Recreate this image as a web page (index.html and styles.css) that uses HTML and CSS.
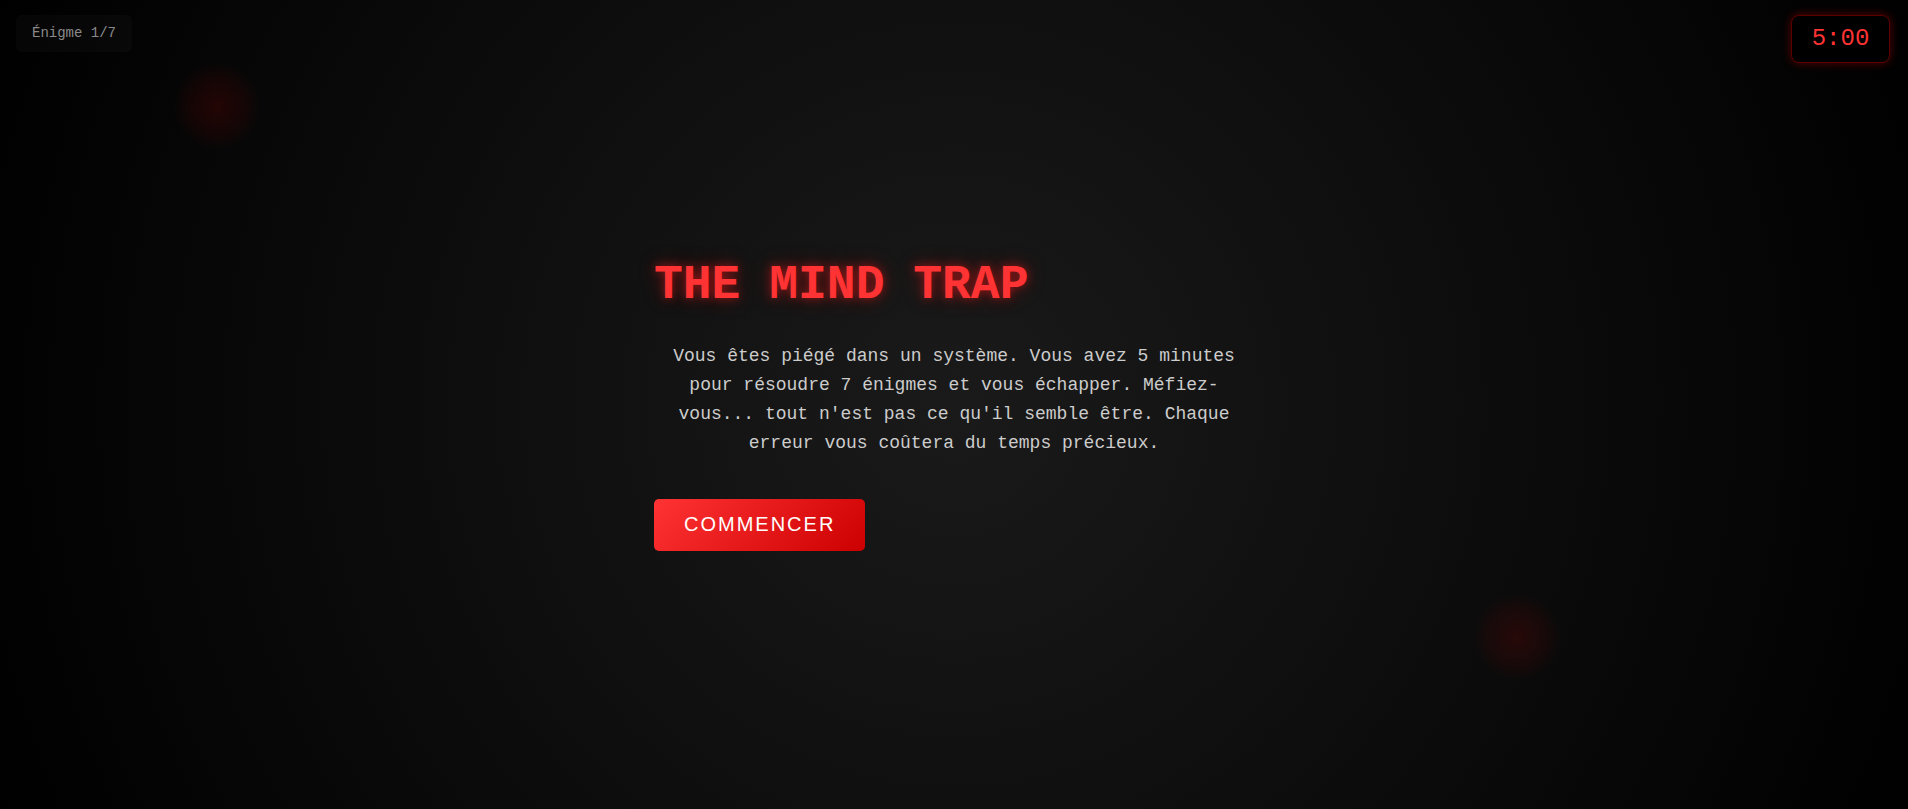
FILE: index.html
```html
<!DOCTYPE html>
<html lang="fr">
<head>
<meta charset="utf-8">
<title>The Mind Trap</title>
<link rel="stylesheet" href="styles.css">
</head>
<body>
  <div class="glow glow-a"></div>
  <div class="glow glow-b"></div>
  <div class="level">Énigme 1/7</div>
  <div class="timer">5:00</div>
  <main class="screen">
    <div class="intro">
      <h1 class="title">THE MIND TRAP</h1>
      <p class="story">Vous êtes piégé dans un système. Vous avez 5 minutes pour résoudre 7 énigmes et vous échapper. Méfiez-vous... tout n'est pas ce qu'il semble être. Chaque erreur vous coûtera du temps précieux.</p>
      <button class="start">COMMENCER</button>
    </div>
  </main>
</body>
</html>
```
FILE: styles.css
```css
* { box-sizing: border-box; }
html, body { height: 100%; }
body {
  margin: 0;
  overflow: hidden;
  background: radial-gradient(circle at center, #1a1a1a 0%, #000000 100%);
  font-family: "Liberation Mono", "Courier New", monospace;
  color: #cccccc;
}
.screen {
  height: 100%;
  display: flex;
  align-items: center;
  justify-content: center;
}
.intro {
  width: 600px;
}
.title {
  margin: 0 0 30px;
  font-family: "Liberation Mono", "Courier New", monospace;
  font-weight: bold;
  font-size: 48px;
  line-height: 54px;
  color: #ff3333;
  text-shadow: 0 0 10px rgba(255, 30, 30, 0.5), 0 0 22px rgba(255, 0, 0, 0.28);
}
.story {
  margin: 0 0 41px;
  text-align: center;
  font-size: 18px;
  line-height: 28.8px;
  color: #cccccc;
}
.start {
  display: block;
  border: none;
  border-radius: 5px;
  padding: 14px 30px 15px;
  background: linear-gradient(135deg, #ff3333 0%, #cc0000 100%);
  color: #ffffff;
  font-family: "Liberation Sans", Arial, sans-serif;
  font-size: 20px;
  line-height: 23px;
  letter-spacing: 2px;
  cursor: pointer;
}
.level {
  position: absolute;
  top: 15px;
  left: 16px;
  padding: 10px 16px 11px;
  border-radius: 5px;
  background: rgba(255, 255, 255, 0.022);
  color: #8a8a8a;
  font-size: 14px;
  line-height: 16px;
}
.timer {
  position: absolute;
  top: 15px;
  right: 18px;
  width: 99px;
  height: 48px;
  display: flex;
  align-items: center;
  justify-content: center;
  background: #000000;
  border: 1px solid #5a0000;
  border-radius: 8px;
  box-shadow: 0 0 10px rgba(200, 0, 0, 0.45);
  color: #ff3333;
  font-size: 24px;
  line-height: 26px;
}
.glow {
  position: absolute;
  width: 90px;
  height: 90px;
  border-radius: 50%;
  background: radial-gradient(circle, rgba(140, 0, 0, 0.22) 0%, rgba(140, 0, 0, 0.1) 45%, rgba(140, 0, 0, 0) 70%);
}
.glow-a { left: 172px; top: 61px; }
.glow-b { left: 1472px; top: 592px; }
```
